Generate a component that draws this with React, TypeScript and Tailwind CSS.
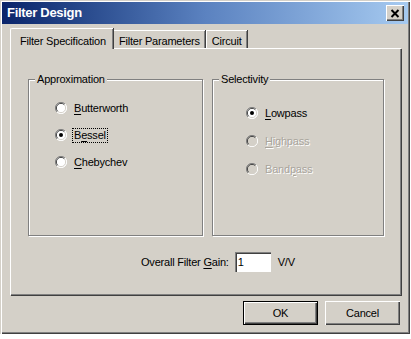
import React from 'react';

function Radio({ checked, disabled }: { checked?: boolean; disabled?: boolean }) {
  return (
    <svg width="12" height="12" viewBox="0 0 12 12" className="shrink-0">
      <circle cx="6" cy="6" r="5.5" fill={disabled ? '#d4d0c8' : '#ffffff'} />
      <path d="M10 2 A5.5 5.5 0 0 0 2 10" stroke="#808080" strokeWidth="1" fill="none" />
      <path d="M2 10 A5.5 5.5 0 0 0 10 2" stroke="#ffffff" strokeWidth="1" fill="none" />
      <path d="M9.3 2.7 A4.6 4.6 0 0 0 2.7 9.3" stroke="#404040" strokeWidth="1" fill="none" />
      <path d="M2.7 9.3 A4.6 4.6 0 0 0 9.3 2.7" stroke="#d4d0c8" strokeWidth="1" fill="none" />
      {checked && <circle cx="6" cy="6" r="2" fill="#000000" />}
    </svg>
  );
}

function Option({
  pre,
  key_,
  post,
  checked,
  disabled,
  focused,
}: {
  pre: string;
  key_: string;
  post: string;
  checked?: boolean;
  disabled?: boolean;
  focused?: boolean;
}) {
  return (
    <div className="flex items-center gap-[6px] h-[16px]">
      <Radio checked={checked} disabled={disabled} />
      <span
        className={`px-[1px] leading-[13px] ${focused ? 'outline outline-1 outline-dotted outline-black' : ''} ${
          disabled ? 'text-[#a8a49c] [text-shadow:1px_1px_0_#ffffff]' : 'text-black'
        }`}
      >
        {pre}
        <span className="underline underline-offset-2">{key_}</span>
        {post}
      </span>
    </div>
  );
}

function GroupBox({ title, width, children }: { title: string; width: string; children: React.ReactNode }) {
  return (
    <div className={`relative ${width} h-[157px] border border-[#808080] shadow-[inset_1px_1px_0_#ffffff,1px_1px_0_#ffffff]`}>
      <span className="absolute -top-[8px] left-[6px] bg-[#d4d0c8] px-[2px] leading-[14px]">{title}</span>
      {children}
    </div>
  );
}

function Button({ children, isDefault }: { children: React.ReactNode; isDefault?: boolean }) {
  return (
    <div
      className={`w-[75px] h-[24px] flex items-center justify-center bg-[#d4d0c8] ${
        isDefault
          ? 'border border-black shadow-[inset_1px_1px_0_#ffffff,inset_-1px_-1px_0_#404040,inset_-2px_-2px_0_#808080]'
          : 'shadow-[inset_1px_1px_0_#ffffff,inset_-1px_-1px_0_#404040,inset_-2px_-2px_0_#808080]'
      }`}
    >
      {children}
    </div>
  );
}

export default function App() {
  return (
    <div className="w-[411px] h-[339px] bg-white font-['Liberation_Sans',Arial,sans-serif] text-[11px] tracking-[-0.2px] text-black">
      <div className="w-[410px] h-[334px] bg-[#d4d0c8] flex flex-col shadow-[inset_1px_1px_0_#d4d0c8,inset_2px_2px_0_#ffffff,inset_-1px_-1px_0_#404040,inset_-2px_-2px_0_#808080]">
        {/* Title bar */}
        <div className="mx-[2px] mt-[2px] h-[22px] flex items-center justify-between pl-[5px] pr-[4px] bg-gradient-to-r from-[#0a246a] via-[#5b82c0] to-[#a6caf0]">
          <span className="text-white font-bold text-[13px] tracking-[-0.3px]">Filter Design</span>
          <div className="w-[18px] h-[16px] bg-[#d4d0c8] flex items-center justify-center shadow-[inset_1px_1px_0_#ffffff,inset_-1px_-1px_0_#404040,inset_-2px_-2px_0_#808080]">
            <svg width="10" height="9" viewBox="0 0 10 9">
              <path d="M1.5 1 L8.5 8 M8.5 1 L1.5 8" stroke="#000" strokeWidth="2" />
            </svg>
          </div>
        </div>

        {/* Tabs */}
        <div className="ml-[10px] mt-[3px] flex items-end h-[21px] relative z-10">
          <div className="h-[21px] pl-[9px] pr-[7px] pt-[4px] bg-[#d4d0c8] border-l border-t border-white rounded-tl-[2px] shadow-[1px_0_0_#404040,inset_-1px_0_0_#808080] -mb-[1px]">
            Filter Specification
          </div>
          <div className="h-[18px] px-[5px] pt-[2px] border-t border-white ml-[1px] shadow-[1px_0_0_#404040,inset_-1px_0_0_#808080]">
            Filter Parameters
          </div>
          <div className="h-[18px] px-[5px] pt-[2px] border-l border-t border-white ml-[1px] shadow-[1px_0_0_#404040,inset_-1px_0_0_#808080]">
            Circuit
          </div>
        </div>

        {/* Panel */}
        <div className="ml-[10px] w-[391px] h-[247px] border-l border-t border-white shadow-[1px_1px_0_#404040,inset_-1px_-1px_0_#808080] flex flex-col">
          <div className="flex gap-[9px] ml-[17px] mt-[30px]">
            <GroupBox title="Approximation" width="w-[175px]">
              <div className="flex flex-col gap-[11px] pl-[26px] pt-[20px]">
                <Option pre="" key_="B" post="utterworth" />
                <Option pre="B" key_="e" post="ssel" checked focused />
                <Option pre="" key_="C" post="hebychev" />
              </div>
            </GroupBox>
            <GroupBox title="Selectivity" width="w-[172px]">
              <div className="flex flex-col gap-[12px] pl-[33px] pt-[25px]">
                <Option pre="" key_="L" post="owpass" checked />
                <Option pre="" key_="H" post="ighpass" disabled />
                <Option pre="Band" key_="p" post="ass" disabled />
              </div>
            </GroupBox>
          </div>

          {/* Gain row */}
          <div className="flex items-center ml-[130px] mt-[16px] h-[20px]">
            <span>
              Overall Filter <span className="underline underline-offset-2">G</span>ain:
            </span>
            <div className="ml-[6px] w-[36px] h-[20px] bg-white pl-[3px] flex items-center shadow-[inset_1px_1px_0_#808080,inset_2px_2px_0_#404040,inset_-1px_-1px_0_#ffffff]">
              1
            </div>
            <span className="ml-[7px]">V/V</span>
          </div>
        </div>

        {/* Buttons */}
        <div className="flex justify-end gap-[7px] mr-[10px] mt-[6px]">
          <Button isDefault>OK</Button>
          <Button>Cancel</Button>
        </div>
      </div>
    </div>
  );
}
